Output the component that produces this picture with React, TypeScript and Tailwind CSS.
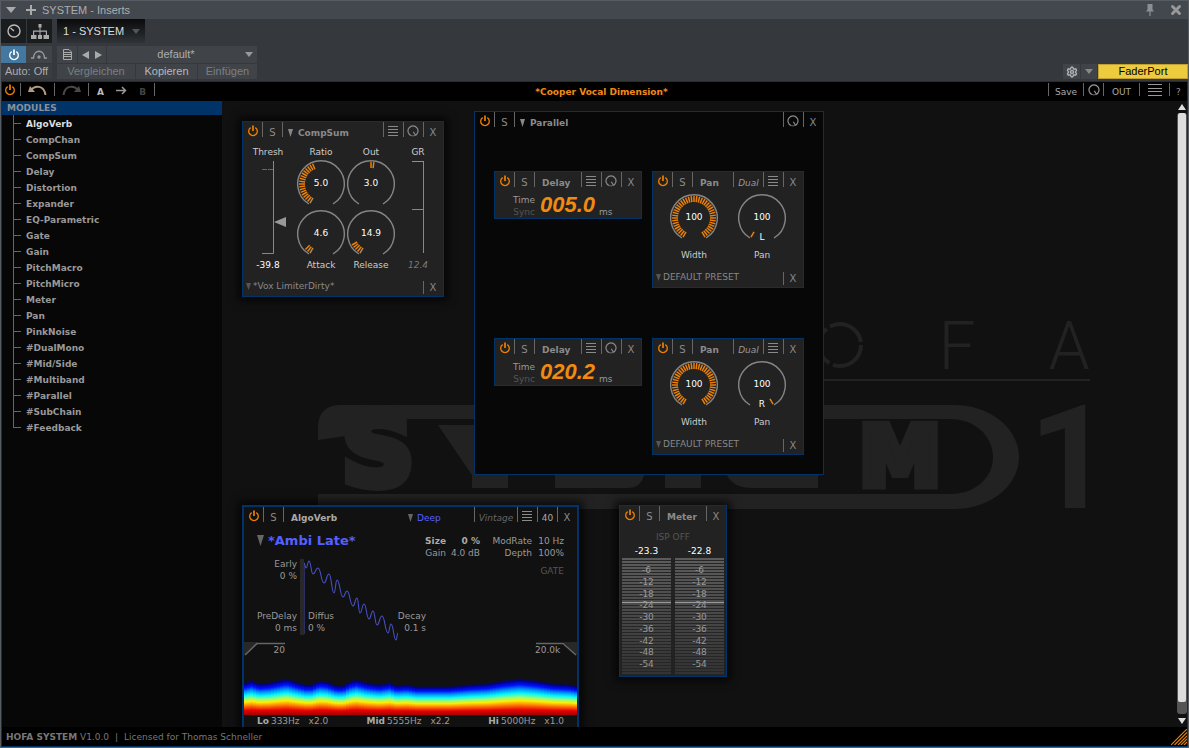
import React, { useState } from 'react';
import { Settings, X } from 'lucide-react';

const MODULES = [
  'AlgoVerb', 'CompChan', 'CompSum', 'Delay', 'Distortion', 'Expander', 'EQ-Parametric',
  'Gate', 'Gain', 'PitchMacro', 'PitchMicro', 'Meter', 'Pan', 'PinkNoise',
  '#DualMono', '#Mid/Side', '#Multiband', '#Parallel', '#SubChain', '#Feedback',
];

const METER_SCALE = [-6, -12, -18, -24, -30, -36, -42, -48, -54];

// turning points of the reverb tail
const TAIL = [
  [0, 5], [2, 10], [5, 3], [9, 16], [14, 10], [20, 25], [25, 16], [30, 35], [33, 22], [39, 39], [43, 33], [49, 48],
  [53, 40], [56, 55], [60, 46], [65, 61], [69, 53], [73, 67], [78, 58], [84, 75], [87, 66], [92, 82], [94, 75],
];

// spectrum level: [x, height]
const SPECTRUM = [
  [0, 33], [6, 35], [14, 32], [24, 33], [41, 37], [53, 33], [60, 31], [66, 31], [74, 35], [81, 34], [91, 30], [98, 30],
  [104, 34], [111, 36], [121, 33], [134, 31], [144, 33], [151, 30], [161, 31], [171, 29], [191, 29], [204, 29],
  [224, 31], [241, 32], [258, 35], [274, 37], [291, 35], [308, 32], [324, 31], [334, 29],
];

function levelAt(x: number) {
  const i = Math.max(1, SPECTRUM.findIndex((p) => p[0] >= x));
  const [x0, y0] = SPECTRUM[i - 1];
  const [x1, y1] = SPECTRUM[i];
  return y0 + ((y1 - y0) * (x - x0)) / (x1 - x0);
}

function tailPath() {
  return TAIL.slice(1).reduce((d, [x, y], i) => {
    const [px, py] = TAIL[i];
    const mid = (px + x) / 2;
    return `${d} C${mid} ${py} ${mid} ${y} ${x} ${y}`;
  }, `M${TAIL[0][0]} ${TAIL[0][1]}`);
}

/* ---------- icons ---------- */

function PowerIcon({ className = '' }: { className?: string }) {
  return (
    <svg width="12" height="12" viewBox="0 0 12 12" className={className} fill="none" stroke="currentColor">
      <path d="M3.7 2.6A4.3 4.3 0 1 0 8.3 2.6" strokeWidth="1.3" />
      <path d="M6 0.5V6" strokeWidth="1.7" />
    </svg>
  );
}

function MenuIcon({ wide = false }: { wide?: boolean }) {
  return wide ? (
    <svg width="14" height="12" viewBox="0 0 14 12" stroke="currentColor">
      <path d="M0 0.5H14M0 4.5H14M0 7.5H14M0 11.5H14" />
    </svg>
  ) : (
    <svg width="10" height="11" viewBox="0 0 10 11" stroke="currentColor">
      <path d="M0 0.5H10M0 3.5H10M0 6.5H10M0 9.5H10" />
    </svg>
  );
}

function DialIcon() {
  return (
    <svg width="12" height="12" viewBox="0 0 12 12" fill="none" stroke="currentColor">
      <path d="M4 10.5A5 5 0 1 1 8 10.5M6.3 6.8L8.2 9.8" strokeWidth="1.2" />
      <path d="M4 10.5A5 5 0 0 0 8 10.5" strokeWidth="0.7" />
    </svg>
  );
}

function Down({ w = 5, h = 8, className = 'text-[#666]' }: { w?: number; h?: number; className?: string }) {
  return (
    <svg width={w} height={h} viewBox="0 0 10 10" preserveAspectRatio="none" className={`shrink-0 ${className}`}>
      <path d="M0 0H10L5 10Z" fill="currentColor" />
    </svg>
  );
}

/* ---------- module parts ---------- */

function Cell({ label, children }: { label: string; children: React.ReactNode }) {
  return (
    <button type="button" aria-label={label} className="flex h-[15px] w-5 shrink-0 justify-center border-l border-[#666] pr-px">
      {children}
    </button>
  );
}

interface HeaderProps {
  name: string;
  arrow?: boolean;
  bright?: boolean;
  menu?: boolean;
  dial?: boolean;
  tag?: React.ReactNode;
  extra?: React.ReactNode;
}

function ModuleHeader({ name, arrow, bright, menu, dial, tag, extra }: HeaderProps) {
  const [on, setOn] = useState(true);
  return (
    <div className="flex h-[15px] leading-[22px] text-[#8a8a8a]">
      <button
        type="button"
        aria-label={`${name} power`}
        aria-pressed={on}
        onClick={() => setOn(!on)}
        className={`flex w-[19px] shrink-0 justify-center pt-[3px] ${on ? 'text-[#f08000]' : 'text-[#555]'}`}
      >
        <PowerIcon />
      </button>
      <Cell label="Solo"><span className="pl-px text-[10px]">S</span></Cell>
      <div className={`flex flex-1 border-l border-[#666] font-bold ${arrow ? 'pl-[5px]' : 'pl-[7px]'} ${bright ? 'text-[#aaa]' : ''}`}>
        {arrow && <Down className="mt-[7px] mr-[5px] text-[#888]" />}
        {name}
      </div>
      {tag}
      {menu && <Cell label="Menu"><span className="pt-1"><MenuIcon /></span></Cell>}
      {dial && <Cell label="Control"><span className="pt-[3px]"><DialIcon /></span></Cell>}
      {extra}
      <Cell label="Close"><span className="text-[10px]">X</span></Cell>
    </div>
  );
}

function PresetRow({ name }: { name: string }) {
  return (
    <div className="flex h-[17px] items-start leading-[15px] text-[#888]">
      <button type="button" className="flex flex-1 items-center gap-[2px] pl-[3px] text-left">
        <Down w={5} h={7} className="text-[#555]" />
        {name}
      </button>
      <button type="button" aria-label="Clear preset" className="mt-[2px] h-[13px] w-5 border-l border-[#666] pr-px text-[10px] leading-[11px]">
        X
      </button>
    </div>
  );
}

const TICKS = 41;

function Knob({ label, value, from, to, side }: { label: string; value: string; from: number; to: number; side?: string }) {
  return (
    <div role="slider" aria-label={label} aria-valuenow={Number(value)} className="relative h-[50px] w-[50px]">
      <svg width="50" height="50" viewBox="0 0 50 50" fill="none">
        <path d="M13 45A23.3 23.3 0 1 1 37 45" stroke="#858585" strokeWidth="1.4" />
        {Array.from({ length: TICKS }, (_, i) => i)
          .filter((i) => i >= from && i <= to)
          .map((i) => (
            <path
              key={i}
              d="M25 3V9"
              stroke={i === 0 && to > 0 && to < 40 ? '#b08a5c' : '#ee8008'}
              strokeWidth="1.5"
              transform={`rotate(${-150 + i * 7.5} 25 25)`}
            />
          ))}
      </svg>
      <span className="absolute inset-0 text-center leading-[49px] text-white">{value}</span>
      {side && <span className="absolute inset-x-0 bottom-0 text-center leading-[11px] text-white">{side}</span>}
    </div>
  );
}

function CompSum() {
  const [thresh, setThresh] = useState(-39.8);
  return (
    <section className="absolute top-5 left-5 w-[202px] border border-[#003468] bg-[#222] shadow-[0_0_8px_4px_#000a]">
      <ModuleHeader name="CompSum" arrow menu dial />
      <div className="flex pt-2 text-center leading-[14px] text-[#ccc]">
        <div className="mr-[3px] w-[50px]">
          <label htmlFor="thresh" className="block">Thresh</label>
          <div className="relative">
            <svg width="50" height="100" viewBox="0 0 50 100" fill="none" stroke="#888">
              <path d="M30.5 2V94.5H19" />
              <path d="M19 10.5H24M25 10.5H30" stroke="#666" />
              <path d="M31 63L43 58V68Z" fill="#999" stroke="none" />
            </svg>
            <input
              id="thresh"
              type="range"
              min={-60}
              max={0}
              step={0.1}
              value={thresh}
              onChange={(e) => setThresh(Number(e.target.value))}
              className="absolute inset-0 h-full w-full opacity-0"
            />
          </div>
          <div className="leading-[12px] text-white">{thresh.toFixed(1)}</div>
        </div>
        <div className="grid w-[100px] grid-cols-2">
          <div>Ratio</div>
          <div>Out</div>
          <Knob label="Ratio" value="5.0" from={0} to={17} />
          <Knob label="Out" value="3.0" from={20} to={21} />
          <Knob label="Attack" value="4.6" from={0} to={2} />
          <Knob label="Release" value="14.9" from={0} to={4} />
          <div className="leading-[12px]">Attack</div>
          <div className="leading-[12px]">Release</div>
        </div>
        <div className="w-[44px]">
          <div>GR</div>
          <svg width="44" height="100" viewBox="0 0 44 100" fill="none" stroke="#888">
            <path d="M27.5 2V94M16 50.5H27" />
            <path d="M16 2.5H28" stroke="#a58c6a" />
          </svg>
          <div className="leading-[12px] text-[#777] italic">12.4</div>
        </div>
      </div>
      <div className="pt-2"><PresetRow name="*Vox LimiterDirty*" /></div>
    </section>
  );
}

function Delay({ time }: { time: string }) {
  return (
    <section className="w-[148px] border border-[#003468] bg-[#222]">
      <ModuleHeader name="Delay" menu dial />
      <div className="flex h-[31px] gap-[5px] pt-[7px] leading-[12px]">
        <div className="w-10 text-right">
          <div className="text-[#999]">Time</div>
          <div className="text-[#555]">Sync</div>
        </div>
        <div className="w-[54px] font-['Liberation_Sans',Arial,sans-serif] text-[22px] leading-[22px] font-bold text-[#f08a10] italic">
          {time}
        </div>
        <span className="pt-3 text-[#999]">ms</span>
      </div>
    </section>
  );
}

function Pan({ side }: { side: 'L' | 'R' }) {
  const at = side === 'L' ? 0 : 40;
  return (
    <section className="w-[152px] border border-[#003468] bg-[#222]">
      <ModuleHeader
        name="Pan"
        menu
        tag={<button type="button" className="h-[15px] w-[30px] border-l border-[#666] text-[#999] italic">Dual</button>}
      />
      <div className="flex gap-[18px] pt-[6px] pl-4 text-center text-[#ccc]">
        <div>
          <Knob label="Width" value="100" from={0} to={40} />
          <div className="pt-[6px] leading-[12px]">Width</div>
        </div>
        <div>
          <Knob label="Pan" value="100" from={at} to={at} side={side} />
          <div className="pt-[6px] leading-[12px]">Pan</div>
        </div>
      </div>
      <div className="pt-[9px]"><PresetRow name="DEFAULT PRESET" /></div>
    </section>
  );
}

function Parallel() {
  return (
    <section className="absolute top-[10px] left-[252px] w-[350px] border border-[#003468] bg-[#070707]">
      <ModuleHeader name="Parallel" arrow dial />
      <div className="flex flex-col gap-[50px] px-[19px] pt-11 pb-[19px]">
        <div className="flex items-start gap-[10px]">
          <Delay time="005.0" />
          <Pan side="L" />
        </div>
        <div className="flex items-start gap-[10px]">
          <Delay time="020.2" />
          <Pan side="R" />
        </div>
      </div>
    </section>
  );
}

function Band({ name, freq, mult }: { name: string; freq: string; mult: string }) {
  return (
    <div className="flex gap-[2px]">
      <b className="text-[#aaa]">{name}</b>
      <span>{freq}</span>
      <span className="pl-[7px]">{mult}</span>
    </div>
  );
}

function AlgoVerb() {
  return (
    <section className="absolute top-[404px] left-5 w-[337px] border-2 border-[#003468] bg-[#111] text-[#999] shadow-[0_0_8px_4px_#000a]">
      <ModuleHeader
        name="AlgoVerb"
        bright
        menu
        tag={
          <>
            <button type="button" className="flex w-[66px] gap-1 text-[#5560ff]">
              <Down className="mt-[7px] text-[#666]" />
              Deep
            </button>
            <button type="button" className="h-[15px] w-[43px] border-l border-[#666] text-[#666] italic">Vintage</button>
          </>
        }
        extra={<button type="button" className="h-[15px] w-5 border-l border-[#666] text-[#aaa]">40</button>}
      />
      <div className="flex h-9 justify-between pr-[13px] leading-[12px]">
        <button type="button" className="flex items-start gap-1 pt-[11px] pl-[13px] text-[13px] leading-[16px] font-bold text-[#5560ff]">
          <Down w={7} h={11} className="mt-[2px] text-[#666]" />
          *Ambi Late*
        </button>
        <dl className="grid grid-cols-[auto_34px_52px_32px] content-start pt-[13px] text-right">
          <dt className="font-bold text-[#aaa]">Size</dt>
          <dd className="font-bold text-[#aaa]">0 %</dd>
          <dt>ModRate</dt>
          <dd>10 Hz</dd>
          <dt>Gain</dt>
          <dd>4.0 dB</dd>
          <dt>Depth</dt>
          <dd>100%</dd>
        </dl>
      </div>
      <div className="flex h-[84px] pr-[13px] leading-[12px]">
        <div className="flex w-[53px] flex-col justify-between pb-2 text-right">
          <div>Early<br />0 %</div>
          <div>PreDelay<br />0 ms</div>
        </div>
        <div className="relative">
          <svg width="98" height="84" viewBox="-7 0 98 84" fill="none" className="overflow-visible">
            <rect x="-4" y="1" width="4" height="76" fill="#282828" />
            <path d="M0.5 5V76" stroke="#2c2e60" />
            <path d={tailPath()} stroke="#4650c8" strokeWidth="1.1" />
          </svg>
          <div className="absolute bottom-2 left-[11px]">Diffus<br />0 %</div>
        </div>
        <div className="flex flex-col justify-end pb-2 text-right">
          <div className="w-[31px]">Decay<br />0.1 s</div>
        </div>
        <button type="button" className="ml-auto self-start pt-[7px] text-[#555]">GATE</button>
      </div>
      <div className="flex justify-between leading-[12px]">
        <div className="relative h-[15px] w-[41px] pt-[2px] text-right">
          <svg width="41" height="15" viewBox="0 0 41 15" fill="none" className="absolute top-0 left-0">
            <path d="M0 0H14L0 13Z" fill="#282828" />
            <path d="M1 13L13 1.5H41" stroke="#666" strokeWidth="1.6" />
          </svg>
          20
        </div>
        <div className="relative h-[15px] w-[42px] pt-[2px]">
          <svg width="42" height="15" viewBox="0 0 42 15" fill="none" className="absolute top-0 right-0">
            <path d="M42 0H28L42 13Z" fill="#282828" />
            <path d="M41 13L28 1.5H1" stroke="#666" strokeWidth="1.6" />
          </svg>
          20.0k
        </div>
      </div>
      <svg width="100%" height="38" viewBox="0 0 333 38" preserveAspectRatio="none" shapeRendering="crispEdges" className="mt-5">
        <defs>
          <linearGradient id="heat" x1="0" y1="1" x2="0" y2="0">
            <stop offset="0" stopColor="#a00000" />
            <stop offset="0.14" stopColor="#e80000" />
            <stop offset="0.28" stopColor="#ff8000" />
            <stop offset="0.39" stopColor="#ffee00" />
            <stop offset="0.49" stopColor="#90ff80" />
            <stop offset="0.6" stopColor="#00f4ff" />
            <stop offset="0.71" stopColor="#0090ff" />
            <stop offset="0.82" stopColor="#0010ff" />
            <stop offset="0.93" stopColor="#000090" />
            <stop offset="1" stopColor="#111111" />
          </linearGradient>
        </defs>
        {Array.from({ length: 111 }, (_, i) => (
          <rect key={i} x={i * 3} y={38 - levelAt(i * 3)} width="3" height={levelAt(i * 3)} fill="url(#heat)" />
        ))}
      </svg>
      <div className="flex justify-between px-[13px] pb-2 leading-[12px]">
        <Band name="Lo" freq="333Hz" mult="x2.0" />
        <Band name="Mid" freq="5555Hz" mult="x2.2" />
        <Band name="Hi" freq="5000Hz" mult="x1.0" />
      </div>
    </section>
  );
}

function MeterBar({ peak }: { peak: string }) {
  return (
    <div className="flex-1 text-center">
      <div className="leading-[13px] text-white">{peak}</div>
      <div className="relative h-[117px] bg-[repeating-linear-gradient(to_bottom,transparent_0_2px,#262626_2px_3px),linear-gradient(#5c5c5c,#323232)]">
        <div className="absolute inset-x-0 top-[44px] h-px bg-[#999]" />
        <div className="flex h-[111px] flex-col justify-between pt-[7px] leading-[10px] text-[#999]">
          {METER_SCALE.map((db) => (
            <span key={db}>{db}</span>
          ))}
        </div>
      </div>
    </div>
  );
}

function Meter() {
  return (
    <section className="absolute top-[404px] left-[397px] w-[108px] border border-[#003468] bg-[#222] shadow-[0_0_8px_4px_#000a]">
      <ModuleHeader name="Meter" />
      <button type="button" className="block w-full pt-[9px] leading-[15px] text-[#555]">ISP OFF</button>
      <div className="flex gap-1 px-[2px] pb-px">
        <MeterBar peak="-23.3" />
        <MeterBar peak="-22.8" />
      </div>
    </section>
  );
}

function Watermark() {
  return (
    <svg width="820" height="290" viewBox="318 270 820 290" fill="#222" className="absolute top-[169px] left-24" aria-hidden="true">
      <circle cx="840" cy="345" r="21" fill="none" stroke="#222" strokeWidth="4" strokeDasharray="40 4" />
      <g fontFamily="Roboto, sans-serif" textAnchor="middle">
        <text x="957" y="369" fontSize="66" fontWeight="300">F</text>
        <text x="1069" y="369" fontSize="66" fontWeight="300">A</text>
        <text x="1070" y="508" fontSize="145" fontWeight="700">1</text>
      </g>
      <path d="M700 379H1090V381H700Z" />
      {/* frame round the name */}
      <path d="M342 405H954C990 405 1019 428 1019 457S990 509 954 509H318V494H950C975 494 993 478 993 457S975 419 950 419H366L346 436L318 440V428C318 412 326 405 342 405Z" />
      <g fontFamily="DejaVu Sans, sans-serif" fontWeight="700" textAnchor="middle" stroke="#222">
        <text x="378" y="485" fontSize="100" strokeWidth="10">S</text>
        <text x="900" y="485" fontSize="82" strokeWidth="9">M</text>
      </g>
      <path d="M438 425H474V478Z" />
      {/* slabs that show below the rack */}
      <path d="M472 455H508V488H472ZM555 475H644C642 484 636 488 628 488H555ZM665 475H701V488H665ZM727 475H818V488H752C740 488 731 484 727 475Z" />
    </svg>
  );
}

/* ---------- host window ---------- */

function HostHeader() {
  return (
    <header className="bg-[#35393d] font-['Liberation_Sans',Arial,sans-serif] text-[11px] text-[#aaadb0]">
      <div className="flex h-[19px] items-center border-t border-[#565c62] bg-[#43484e] px-[5px]">
        <Down w={10} h={6} className="text-[#aaa]" />
        <svg width="10" height="10" viewBox="0 0 10 10" stroke="#aaa" strokeWidth="2" className="mr-[6px] ml-[10px]">
          <path d="M5 0V10M0 5H10" />
        </svg>
        <span className="flex-1">SYSTEM - Inserts</span>
        <button type="button" aria-label="Pin">
          <svg width="8" height="12" viewBox="0 0 8 12" fill="#8b8f93">
            <path d="M1.5 0H6.5V5.5L8 7.5H0L1.5 5.5ZM3.4 7.5H4.6V12H3.4Z" />
          </svg>
        </button>
        <button type="button" aria-label="Close window" className="ml-[15px] text-[#999]">
          <X size={14} strokeWidth={5} />
        </button>
      </div>

      <div className="flex h-[27px] items-start">
        <button type="button" aria-label="Macro" className="flex h-6 w-[25px] items-center justify-center bg-[#1b1c1e]">
          <svg width="14" height="14" viewBox="0 0 14 14" fill="none" stroke="#bbb" strokeWidth="1.4">
            <circle cx="7" cy="7" r="6" />
            <path d="M7 7L3.5 4" />
          </svg>
        </button>
        <button type="button" aria-label="Routing" className="ml-px flex h-6 w-[25px] items-center justify-center bg-[#1b1c1e]">
          <svg width="18" height="15" viewBox="0 0 18 15" fill="#aaa">
            <path d="M7.5 0H10.5V3.5H9.5V6.5H16V11H18V15H12.5V11H14.8V7.7H9.5V11H11V15H7V11H8.5V7.7H3.2V11H5.5V15H0V11H2V6.5H8.5V3.5H7.5Z" />
          </svg>
        </button>
        <button type="button" className="ml-[5px] flex h-6 w-[88px] items-center bg-linear-to-b from-[#0a0a0b] to-[#303438] pl-[6px] text-[#ddd]">
          <span className="flex-1 text-left">1 - SYSTEM</span>
          <Down w={8} h={5} className="mr-[5px] text-[#555]" />
        </button>
      </div>

      <div className="flex h-[17px]">
        <button type="button" aria-label="Power" className="flex w-[25px] items-center justify-center bg-[#4379a0] text-white">
          <PowerIcon />
        </button>
        <button type="button" aria-label="Bypass" className="flex w-[26px] items-center justify-center bg-[#404448]">
          <svg width="16" height="9" viewBox="0 0 16 9" fill="none" stroke="#999">
            <path d="M0 8H2.5C3 -1 13 -1 13.5 8H16" strokeWidth="1.4" />
            <circle cx="8" cy="7" r="1.7" fill="#999" stroke="none" />
          </svg>
        </button>
        <button type="button" aria-label="Presets" className="ml-[5px] flex w-5 items-center justify-center bg-[#404448]">
          <svg width="9" height="11" viewBox="0 0 9 11" fill="none" stroke="#aaa">
            <path d="M0.5 0.5H6L8.5 3V10.5H0.5ZM0.5 3.5H8M0.5 5.5H8M0.5 7.5H8" />
          </svg>
        </button>
        <div className="ml-px flex w-[28px] items-center justify-between bg-[#404448] px-1">
          <button type="button" aria-label="Previous preset">
            <svg width="7" height="8" viewBox="0 0 7 8" fill="#aaa"><path d="M7 0V8L0 4Z" /></svg>
          </button>
          <button type="button" aria-label="Next preset">
            <svg width="7" height="8" viewBox="0 0 7 8" fill="#aaa"><path d="M0 0V8L7 4Z" /></svg>
          </button>
        </div>
        <button type="button" className="ml-px flex w-[150px] items-center bg-[#404448] pr-1">
          <span className="flex-1">default*</span>
          <Down w={8} h={5} className="text-[#999]" />
        </button>
      </div>

      <div className="flex h-[18px] pt-px leading-[15px]">
        <button type="button" className="h-[15px] w-[51px] bg-[#393d41]">Auto: Off</button>
        <div className="ml-[5px] flex gap-px text-[#7b7f83]">
          <button type="button" className="h-[15px] w-[78px] bg-[#404448]">Vergleichen</button>
          <button type="button" className="h-[15px] w-[61px] bg-[#404448] text-[#b5b8ba]">Kopieren</button>
          <button type="button" className="h-[15px] w-[59px] bg-[#404448]">Einfügen</button>
        </div>
        <div className="ml-auto flex gap-px">
          <button type="button" aria-label="Settings" className="flex h-[15px] w-[17px] items-center justify-center bg-[#404448]">
            <Settings size={12} strokeWidth={3} />
          </button>
          <button type="button" aria-label="More" className="flex h-[15px] w-4 items-center justify-center bg-[#404448]">
            <Down w={8} h={5} className="text-[#888]" />
          </button>
          <button type="button" className="h-[15px] w-[90px] border border-[#bfa030] bg-[#eccb3f] leading-[13px] text-black">FaderPort</button>
        </div>
      </div>
    </header>
  );
}

function Toolbar() {
  const divided = 'h-[13px] border-l border-[#666]';
  return (
    <div className="flex h-[19px] items-start bg-black pt-px leading-[18px] text-[#999]">
      <button type="button" aria-label="Power" className="w-[18px] pt-px pl-[2px] text-[#f08000]"><PowerIcon /></button>
      <button type="button" aria-label="Undo" className={`${divided} flex w-[34px] justify-center pt-[2px]`}>
        <svg width="19" height="10" viewBox="0 0 19 10" fill="none" stroke="#b59a80" strokeWidth="2">
          <path d="M3 5C7 0 16 0 17.5 10" />
          <path d="M0 7L2 1L7 7Z" fill="#b59a80" stroke="none" />
        </svg>
      </button>
      <button type="button" aria-label="Redo" className={`${divided} flex w-[34px] justify-center pt-[2px]`}>
        <svg width="19" height="10" viewBox="0 0 19 10" fill="none" stroke="#4a4a4a" strokeWidth="2">
          <path d="M16 5C12 0 3 0 1.5 10" />
          <path d="M19 7L17 1L12 7Z" fill="#4a4a4a" stroke="none" />
        </svg>
      </button>
      <div className={`${divided} flex w-[66px] justify-between px-2 font-bold`}>
        <button type="button" className="text-[#bbb]">A</button>
        <button type="button" aria-label="Copy A to B" className="pt-[2px]">
          <svg width="11" height="9" viewBox="0 0 11 9" fill="none" stroke="#999" strokeWidth="1.5"><path d="M0 4.5H9M6 1L9.5 4.5L6 8" /></svg>
        </button>
        <button type="button" className="text-[#444]">B</button>
      </div>
      <h1 className={`${divided} flex-1 text-center font-bold text-[#f08a18]`}>*Cooper Vocal Dimension*</h1>
      <button type="button" className={`${divided} w-[35px] text-[#aaa]`}>Save</button>
      <button type="button" aria-label="Control" className={`${divided} flex w-5 justify-center pt-px`}><DialIcon /></button>
      <button type="button" className={`${divided} w-9 text-[#aaa]`}>OUT</button>
      <button type="button" aria-label="Menu" className={`${divided} flex w-[30px] justify-center pt-px`}><MenuIcon wide /></button>
      <button type="button" className={`${divided} w-[18px]`}>?</button>
    </div>
  );
}

function Sidebar() {
  return (
    <nav className="w-[220px] shrink-0 overflow-hidden bg-[#070707] font-bold">
      <h2 className="h-[14px] bg-[#003468] pl-[5px] leading-[15px] text-[#8a9098]">MODULES</h2>
      <ul>
        {MODULES.map((name, i) => (
          <li key={name} className="flex h-4">
            <div className={`ml-[11px] w-2 border-l border-[#666] ${i === MODULES.length - 1 ? 'h-[9px]' : 'h-4'}`}>
              <div className="h-[9px] border-b border-[#666]" />
            </div>
            <button type="button" className={`ml-[5px] leading-[18px] ${i === 0 ? 'text-[#ddd]' : 'text-[#999]'}`}>{name}</button>
          </li>
        ))}
      </ul>
    </nav>
  );
}

function ScrollBar() {
  return (
    <div className="flex w-[10px] shrink-0 flex-col items-center bg-[#111]">
      <svg width="8" height="6" viewBox="0 0 8 6" fill="#ddd" className="my-[3px] shrink-0"><path d="M4 0L8 6H0Z" /></svg>
      <div className="flex w-full flex-1 flex-col rounded-[3px] bg-[#555]">
        <div className="mx-px mb-3 flex-1 rounded-[2px] bg-[#ddd]" />
      </div>
      <svg width="8" height="6" viewBox="0 0 8 6" fill="#ddd" className="mt-1 mb-[3px] shrink-0"><path d="M0 0H8L4 6Z" /></svg>
    </div>
  );
}

export default function App() {
  return (
    <div className="flex h-screen flex-col overflow-hidden border-x border-b border-[#565c62] bg-[#35393d]">
      <HostHeader />
      <div className="flex min-h-0 flex-1 flex-col border border-[#003468] bg-black font-['DejaVu_Sans',Verdana,sans-serif] text-[9px]">
        <Toolbar />
        <div className="flex min-h-0 flex-1">
          <Sidebar />
          <main className="relative flex-1 overflow-hidden bg-[#111]">
            <Watermark />
            <CompSum />
            <Parallel />
            <AlgoVerb />
            <Meter />
          </main>
          <ScrollBar />
        </div>
        <footer className="flex h-[19px] shrink-0 items-center justify-between bg-black pl-1 text-[#777]">
          <p className="flex gap-[6px] leading-[20px]">
            <span><b>HOFA SYSTEM</b> V1.0.0</span>
            <span>|</span>
            <span>Licensed for Thomas Schneller</span>
          </p>
          <svg width="16" height="16" viewBox="0 0 16 16" stroke="#e08010" strokeWidth="1.2">
            <path d="M0 16L16 0M3.5 16L16 3.5M7 16L16 7M10 16L16 10M13 16L16 13" />
          </svg>
        </footer>
      </div>
    </div>
  );
}
